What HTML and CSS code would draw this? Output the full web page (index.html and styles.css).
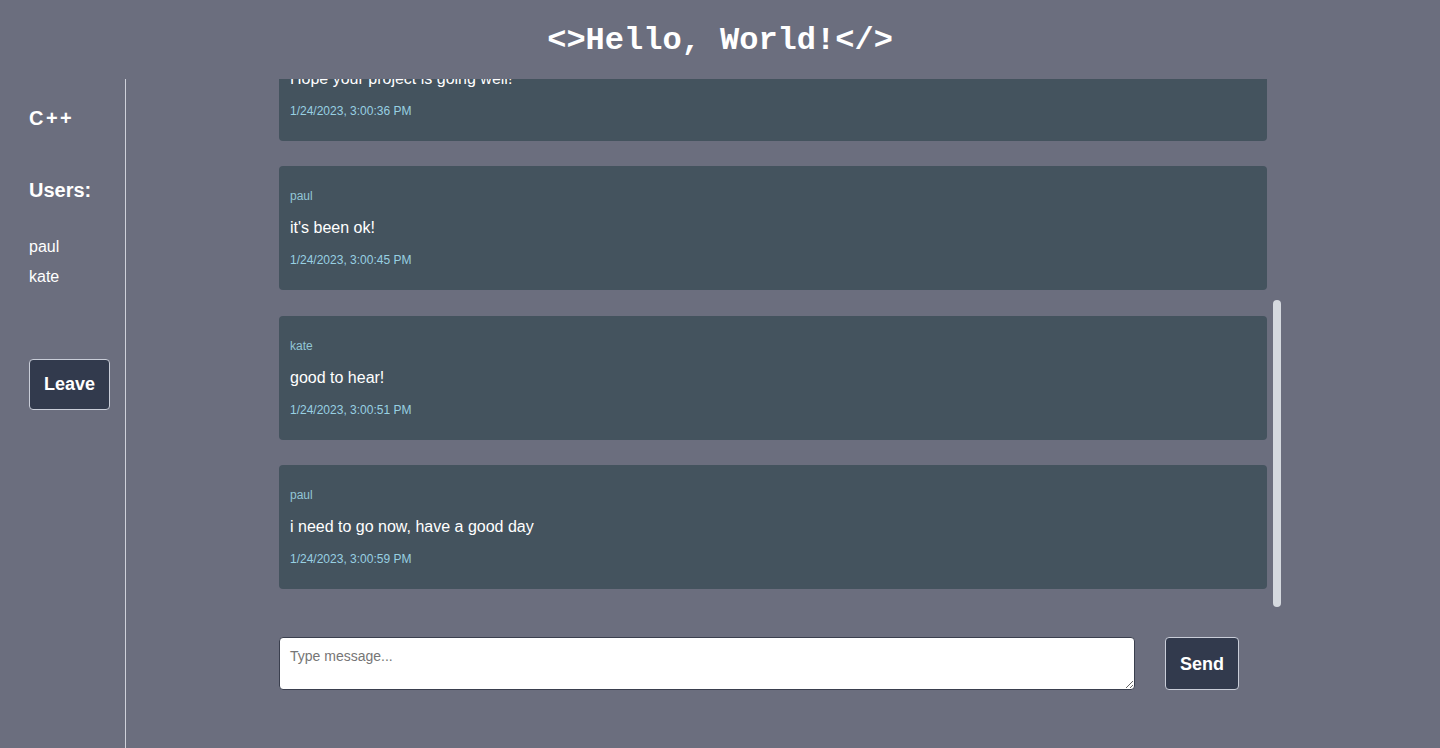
FILE: index.html
```html
<!DOCTYPE html>
<html lang="en">
<head>
<meta charset="utf-8">
<title>Chat</title>
<link rel="stylesheet" href="styles.css">
</head>
<body>
<header class="top">
  <h1 class="title">&lt;&gt;Hello, World!&lt;/&gt;</h1>
</header>
<div class="layout">
  <aside class="sidebar">
    <h2 class="room">C++</h2>
    <h3 class="users-title">Users:</h3>
    <ul class="users">
      <li>paul</li>
      <li>kate</li>
    </ul>
    <button class="btn leave">Leave</button>
  </aside>
  <main class="main">
    <div class="chat">
      <div class="scroller">
        <div class="messages">
          <div class="card">
            <p class="author">kate</p>
            <p class="text">hi paul!</p>
            <p class="time">1/24/2023, 3:00:21 PM</p>
          </div>
          <div class="card">
            <p class="author">paul</p>
            <p class="text">hey kate, how are you?</p>
            <p class="time">1/24/2023, 3:00:29 PM</p>
          </div>
          <div class="card">
            <p class="author">kate</p>
            <p class="text">Hope your project is going well!</p>
            <p class="time">1/24/2023, 3:00:36 PM</p>
          </div>
          <div class="card">
            <p class="author">paul</p>
            <p class="text">it's been ok!</p>
            <p class="time">1/24/2023, 3:00:45 PM</p>
          </div>
          <div class="card">
            <p class="author">kate</p>
            <p class="text">good to hear!</p>
            <p class="time">1/24/2023, 3:00:51 PM</p>
          </div>
          <div class="card">
            <p class="author">paul</p>
            <p class="text">i need to go now, have a good day</p>
            <p class="time">1/24/2023, 3:00:59 PM</p>
          </div>
        </div>
      </div>
      <div class="track" aria-hidden="true"><div class="thumb"></div></div>
    </div>
    <form class="composer" onsubmit="return false">
      <textarea class="input" placeholder="Type message..."></textarea>
      <button class="btn send" type="submit">Send</button>
    </form>
  </main>
</div>
</body>
</html>
```

FILE: styles.css
```css
* { box-sizing: border-box; }

html, body {
  margin: 0;
  height: 100%;
}

body {
  background: #6b6e7e;
  color: #f2f2f2;
  font-family: "Liberation Sans", Arial, sans-serif;
  overflow: hidden;
}

.top {
  height: 79px;
  display: flex;
  align-items: center;
  justify-content: center;
}

.title {
  margin: 0;
  font-family: "Liberation Mono", "Courier New", monospace;
  font-weight: bold;
  font-size: 32px;
  line-height: 36px;
  color: #ffffff;
  padding-top: 2px;
}

.layout {
  display: flex;
  height: 669px;
}

.sidebar {
  width: 126px;
  flex: 0 0 126px;
  border-right: 1px solid #cfd1da;
  padding: 28px 0 0 29px;
}

.room {
  margin: 0;
  font-size: 20px;
  line-height: 23px;
  font-weight: bold;
  letter-spacing: 2.5px;
  color: #ffffff;
}

.users-title {
  margin: 49px 0 0;
  font-size: 20px;
  line-height: 23px;
  font-weight: bold;
  color: #ffffff;
}

.users {
  list-style: none;
  margin: 36px 0 0;
  padding: 0;
  display: flex;
  flex-direction: column;
  gap: 12px;
}

.users li {
  font-size: 16px;
  line-height: 18px;
  color: #ffffff;
}

.btn {
  background: #323a4d;
  color: #ffffff;
  border: 1px solid #c9cdd8;
  border-radius: 4px;
  font-family: "Liberation Sans", Arial, sans-serif;
  font-weight: bold;
  font-size: 18px;
  line-height: 21px;
  cursor: pointer;
}

.leave {
  margin-top: 73px;
  width: 81px;
  height: 51px;
  padding: 0;
}

.main {
  flex: 1;
  display: flex;
  flex-direction: column;
  padding-left: 153px;
}

.chat {
  display: flex;
  width: 1004px;
  height: 529px;
}

.scroller {
  width: 988px;
  flex: 0 0 988px;
  height: 100%;
  overflow-y: auto;
  scrollbar-width: none;
  display: flex;
  flex-direction: column-reverse;
}

.scroller::-webkit-scrollbar {
  display: none;
}

.track {
  flex: 0 0 16px;
  display: flex;
  flex-direction: column;
  justify-content: flex-end;
  padding: 0 2px 1px 6px;
}

.thumb {
  height: 307px;
  background: #d5d9df;
  border-radius: 4px;
}

.messages {
  display: flex;
  flex-direction: column;
  gap: 25.5px;
  padding: 24px 0 19px;
}

.card {
  flex: 0 0 auto;
  background: #44535e;
  border-radius: 4px;
  height: 124px;
  padding: 23px 11px 0;
}

.card p {
  margin: 0;
}

.author {
  font-size: 12px;
  line-height: 14px;
  color: #93c6d6;
}

.text {
  margin-top: 16px !important;
  font-size: 16px;
  line-height: 18px;
  color: #ffffff;
}

.time {
  margin-top: 16px !important;
  font-size: 12px;
  line-height: 14px;
  color: #98d0e2;
}

.composer {
  margin: 29px 0 0;
  display: flex;
  gap: 30px;
  height: 53px;
}

.input {
  width: 856px;
  height: 53px;
  background: #ffffff;
  border: 1px solid #3a3f4e;
  border-radius: 4px;
  padding: 10px 10px;
  font-family: "Liberation Sans", Arial, sans-serif;
  font-size: 14px;
  line-height: 17px;
  color: #222;
  resize: vertical;
}

.input::placeholder {
  color: #767676;
}

.send {
  width: 74px;
  height: 53px;
  padding: 1px 0 0;
}
```
